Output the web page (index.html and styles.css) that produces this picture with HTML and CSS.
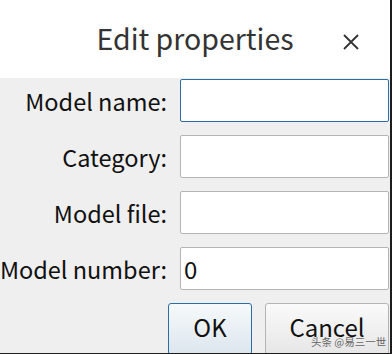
FILE: index.html
```html
<!DOCTYPE html>
<html lang="en">
<head>
    <meta charset="UTF-8">
    <title>Edit properties</title>
    <link rel="stylesheet" href="styles.css">
</head>
<body>
    <div class="dialog">
        <div class="titlebar">
            <span class="title">Edit properties</span>
            <span class="close">
                <svg width="16" height="16" viewBox="0 0 16 16"><path d="M1 1 L15 15 M15 1 L1 15" stroke="#333" stroke-width="1.8"/></svg>
            </span>
        </div>

        <div class="form">
            <label class="label">Model name:</label>
            <input class="field focused" type="text">
            <label class="label">Category:</label>
            <input class="field" type="text">
            <label class="label">Model file:</label>
            <input class="field" type="text">
            <label class="label">Model number:</label>
            <input class="field" type="text" value="0">
        </div>

        <div class="buttons">
            <button class="btn ok">OK</button>
            <button class="btn cancel">Cancel</button>
        </div>

        <div class="watermark">头条 @易三一世</div>
    </div>
</body>
</html>
```

FILE: styles.css
```css
body {
    margin: 0;
    background-color: #1c1c1c;
    font-family: "Noto Sans CJK SC", "Noto Sans", sans-serif;
}

.dialog {
    position: relative;
    width: 390px;
    height: 353px;
    background-color: #efefef;
    overflow: hidden;
}

.titlebar {
    height: 78px;
    background-color: #fff;
    display: flex;
    align-items: center;
    justify-content: center;
    position: relative;
}
.title {
    font-size: 28.5px;
    color: #333;
    margin-top: -3px;
}
.close {
    position: absolute;
    left: 343px;
    top: 31px;
    width: 16px;
    height: 16px;
}

.form {
    display: grid;
    grid-template-columns: 167px 209px;
    grid-auto-rows: 43px;
    column-gap: 13px;
    row-gap: 13px;
    margin-top: 1px;
}
.label {
    display: flex;
    justify-content: flex-end;
    align-items: center;
    font-size: 23.5px;
    color: #111;
    white-space: nowrap;
}
.field {
    box-sizing: border-box;
    height: 43px;
    margin: 0;
    border: 1px solid #b4b4b4;
    border-radius: 2px;
    background: #fff;
    font-family: inherit;
    font-size: 24px;
    color: #111;
    padding: 0 3px;
    outline: none;
}
.field.focused {
    border-color: #2b6ea6;
}

.buttons {
    display: flex;
    gap: 13px;
    margin-top: 13px;
    padding-left: 168px;
}
.btn {
    box-sizing: border-box;
    height: 52px;
    border-radius: 3px;
    font-family: inherit;
    font-size: 24px;
    color: #111;
    padding: 0 0 6px 0;
    background: linear-gradient(#fafafa, #e6e6e6);
    border: 1px solid #b4b4b4;
}
.ok {
    width: 84px;
    border-color: #2b6ea6;
    background: linear-gradient(#f6f9fb, #dde6ee);
}
.cancel {
    width: 124px;
}

.watermark {
    position: absolute;
    left: 311px;
    top: 334px;
    font-size: 10.5px;
    color: #666;
    white-space: nowrap;
}
```
